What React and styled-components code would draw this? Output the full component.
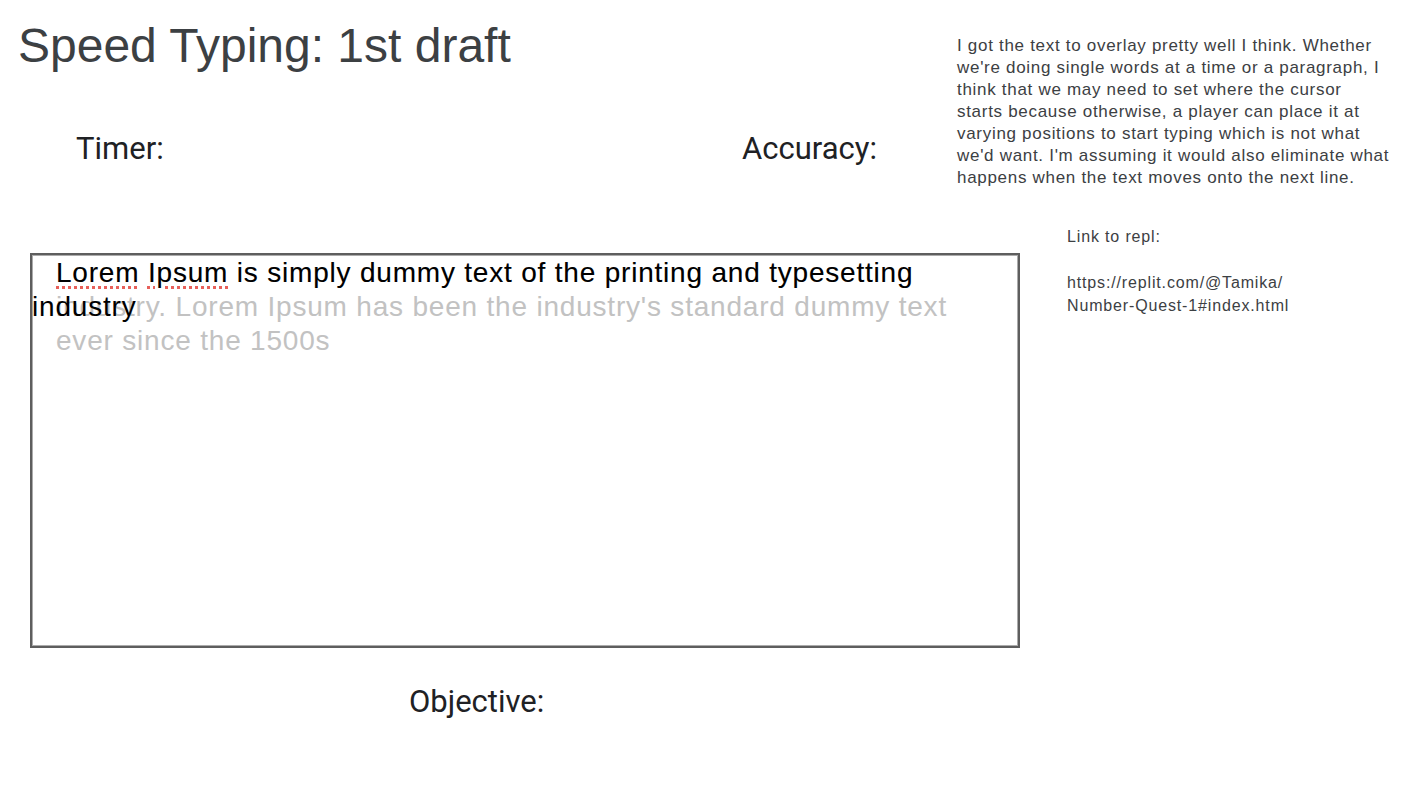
import React from 'react';
import styled, { createGlobalStyle } from 'styled-components';

const GlobalStyle = createGlobalStyle`
  body {
    margin: 0;
    background: #fff;
    font-family: "Liberation Sans", Arial, sans-serif;
  }
`;

const Page = styled.div`
  width: 1422px;
  min-height: 800px;
`;

const TopSection = styled.div`
  display: flex;
  align-items: flex-start;
`;

const Intro = styled.div`
  width: 957px;
  flex: none;
`;

const Title = styled.h1`
  margin: 18px 0 0 18px;
  font-size: 48px;
  line-height: 55px;
  font-weight: 400;
  color: #3c4043;
`;

const StatsRow = styled.div`
  display: flex;
  justify-content: space-between;
  margin-top: 59px;
  padding: 0 80px 0 76px;
`;

const Label = styled.div`
  font-family: Roboto, "Liberation Sans", sans-serif;
  font-size: 31px;
  line-height: 33px;
  color: #202124;
`;

const Notes = styled.p`
  margin: 35px 0 0;
  width: 435px;
  font-size: 17px;
  line-height: 22px;
  letter-spacing: 0.7px;
  color: #3c4043;
`;

const MiddleSection = styled.div`
  display: flex;
  align-items: flex-start;
  margin-top: 36px;
`;

const TypingBox = styled.div`
  position: relative;
  box-sizing: border-box;
  width: 990px;
  height: 395px;
  margin: 28px 0 0 30px;
  border: 2px solid #5e5e5e;
  box-shadow: inset 0 0 0 1px #ababab;
  font-size: 28px;
  line-height: 34px;
  letter-spacing: 0.8px;
`;

const PromptText = styled.p`
  margin: 0;
  padding: 1px 24px 0;
  color: #c2c2c2;
`;

const TypedText = styled.p`
  position: absolute;
  top: 0;
  left: 0;
  right: 0;
  margin: 0;
  padding-top: 1px;
  text-indent: 24px;
  color: #000;
`;

const Misspelled = styled.span`
  text-decoration: underline dotted #e8605a;
  text-decoration-thickness: 3px;
  text-underline-offset: 4px;
`;

const LinkBlock = styled.p`
  margin: 0 0 0 47px;
  font-size: 16px;
  line-height: 23px;
  letter-spacing: 0.85px;
  color: #3c4043;
`;

const Footer = styled.div`
  margin-top: 37px;
  padding-left: 409px;
`;

export default function App() {
  return (
    <Page>
      <GlobalStyle />
      <TopSection>
        <Intro>
          <Title>Speed Typing: 1st draft</Title>
          <StatsRow>
            <Label>Timer:</Label>
            <Label>Accuracy:</Label>
          </StatsRow>
        </Intro>
        <Notes>
          I got the text to overlay pretty well I think. Whether we're doing single words at a
          time or a paragraph, I think that we may need to set where the cursor starts because
          otherwise, a player can place it at varying positions to start typing which is not what
          we'd want. I'm assuming it would also eliminate what happens when the text moves onto
          the next line.
        </Notes>
      </TopSection>
      <MiddleSection>
        <TypingBox>
          <PromptText>
            Lorem Ipsum is simply dummy text of the printing and typesetting industry. Lorem Ipsum
            has been the industry's standard dummy text ever since the 1500s
          </PromptText>
          <TypedText>
            <Misspelled>Lorem</Misspelled> <Misspelled>Ipsum</Misspelled> is simply dummy text of
            the printing and typesetting industry
          </TypedText>
        </TypingBox>
        <LinkBlock>
          Link to repl:
          <br />
          <br />
          https://replit.com/@Tamika/
          <br />
          Number-Quest-1#index.html
        </LinkBlock>
      </MiddleSection>
      <Footer>
        <Label>Objective:</Label>
      </Footer>
    </Page>
  );
}
